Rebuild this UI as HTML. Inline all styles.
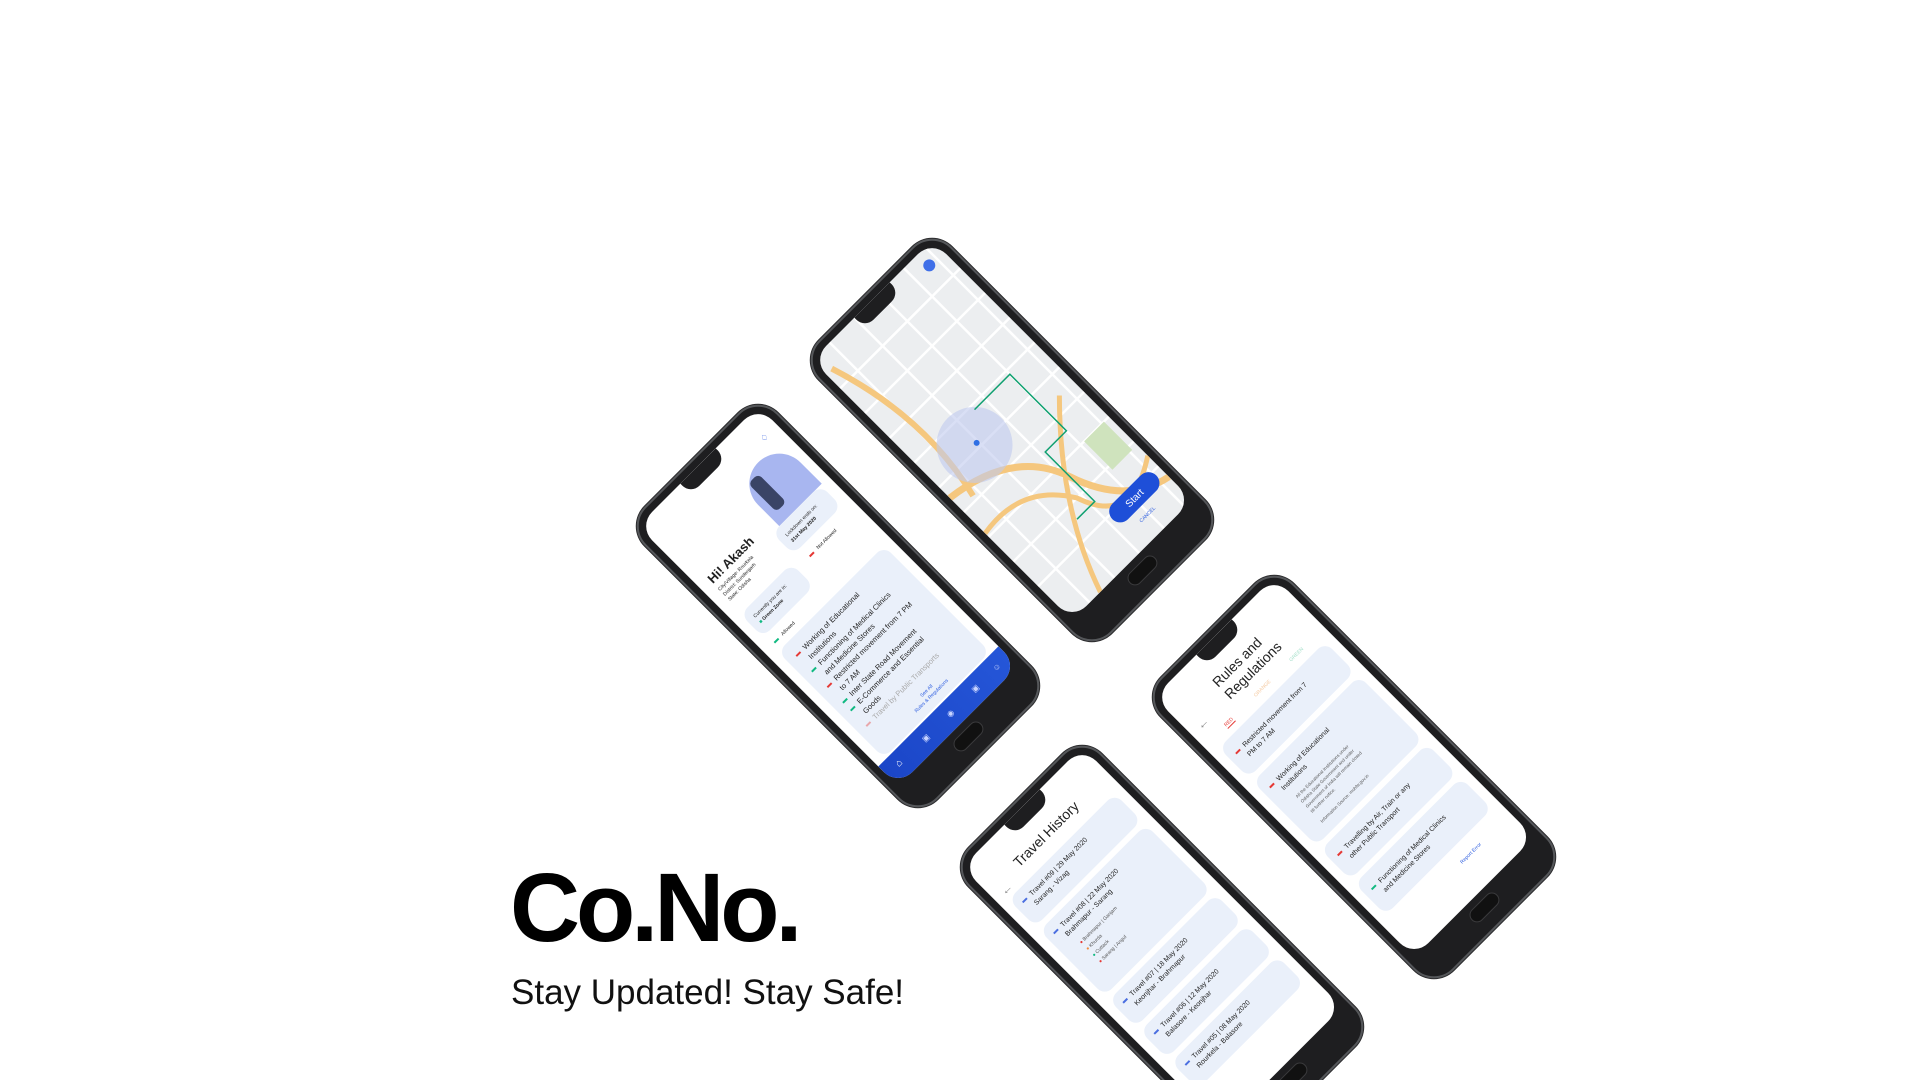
<!DOCTYPE html>
<html><head><meta charset="utf-8"><style>
*{margin:0;padding:0;box-sizing:border-box}
html,body{width:1920px;height:1080px;overflow:hidden}
body{background:#fff;position:relative;font-family:"Liberation Sans",sans-serif}
.ph{position:absolute;width:188px;height:414px;transform:rotate(-45deg);background:#1e1e20;border-radius:28px;border:2px solid #55575a;box-shadow:0 0 0 1px #2a2a2c}
.sc{position:absolute;left:7px;top:7px;width:170px;height:368px;background:#fff;border-radius:20px;overflow:hidden}
.notch{position:absolute;left:60px;top:0;width:50px;height:15px;background:#1e1e20;border-radius:0 0 12px 12px}
.hb{position:absolute;left:74px;top:382px;width:36px;height:15px;border-radius:9px;background:#111;border:1px solid #3a3a3c}
.t{position:absolute;color:#222;white-space:nowrap}
.card{position:absolute;background:#eaf0fa;border-radius:10px}
.d{display:inline-block;width:6px;height:2px;margin-right:5px;vertical-align:middle}
.r{background:#e53935}.g{background:#10b981}
</style></head><body>

<!-- Map phone -->
<div class="ph" style="left:918px;top:233px">
<div class="sc" style="background:#eceef0">
<svg width="170" height="368" style="position:absolute;left:0;top:0">
<g stroke="#fff" stroke-width="2.5"><line x1="0" y1="40" x2="170" y2="40"/><line x1="0" y1="75" x2="170" y2="75"/><line x1="0" y1="110" x2="170" y2="110"/><line x1="0" y1="145" x2="170" y2="145"/><line x1="0" y1="180" x2="170" y2="180"/><line x1="0" y1="215" x2="170" y2="215"/><line x1="0" y1="250" x2="170" y2="250"/><line x1="0" y1="285" x2="170" y2="285"/><line x1="0" y1="320" x2="170" y2="320"/><line x1="25" y1="0" x2="25" y2="368"/><line x1="60" y1="0" x2="60" y2="368"/><line x1="95" y1="0" x2="95" y2="368"/><line x1="130" y1="0" x2="130" y2="368"/><line x1="160" y1="0" x2="160" y2="368"/></g>
<rect x="135" y="250" width="28" height="40" fill="#cfe3bd"/>
<path d="M8 20 Q40 120 18 210" stroke="#f5c77e" stroke-width="6" fill="none"/>
<path d="M0 195 Q80 205 100 265 Q120 325 170 335" stroke="#f5c77e" stroke-width="7" fill="none"/>
<path d="M0 245 Q60 235 90 285 Q110 345 170 305" stroke="#f5c77e" stroke-width="5" fill="none"/>
<path d="M40 368 Q70 280 150 200" stroke="#f5c77e" stroke-width="5" fill="none"/>
<circle cx="55" cy="175" r="38" fill="#bfc9ef" opacity=".6"/>
<path d="M80 150 L130 150 L130 230 L100 230 L100 300 L75 300" stroke="#10a070" stroke-width="1.5" fill="none"/>
<circle cx="58" cy="175" r="3" fill="#2f6fe4"/>
<circle cx="150" cy="16" r="6" fill="#3f6fe8"/>
<rect x="100" y="314" width="62" height="22" rx="11" fill="#1e4fd8"/>
<text x="120" y="329" fill="#fff" font-size="10" font-family="Liberation Sans">Start</text>
<text x="118" y="348" fill="#2f5fe0" font-size="5" font-family="Liberation Sans">CANCEL</text>
</svg>
<div class="notch"></div></div><div class="hb"></div></div>

<!-- Home phone -->
<div class="ph" style="left:744px;top:399px">
<div class="sc">
<div class="notch"></div>
<div style="position:absolute;left:100px;top:40px;width:60px;height:60px;border-radius:50% 50% 0 0;background:#a8b6f0"></div>
<div style="position:absolute;left:108px;top:48px;width:14px;height:40px;background:#3a4466;border-radius:5px"></div>
<div class="t" style="left:148px;top:22px;color:#3a64e0;font-size:9px">♢</div>
<div class="t" style="left:12px;top:82px;font-size:13px;font-weight:bold">Hi! Akash</div>
<div class="t" style="left:12px;top:100px;font-size:5px;line-height:7px">City/Village: Rourkela<br>District: Sundergarh<br>State: Odisha</div>
<div class="card" style="left:90px;top:100px;width:68px;height:30px"><div class="t" style="left:8px;top:8px;font-size:5px;line-height:8px">Lockdown ends on:<br><b>31st May 2020</b></div></div>
<div class="card" style="left:10px;top:135px;width:72px;height:32px"><div class="t" style="left:8px;top:8px;font-size:5px;line-height:8px">Currently you are in:<br><span style="color:#10b981">■</span> <b>Green Zone</b></div></div>
<div class="t" style="left:14px;top:176px;font-size:5px"><span class="d g"></span>Allowed</div>
<div class="t" style="left:100px;top:140px;font-size:5px"><span class="d r"></span>Not Allowed</div>
<div class="card" style="left:10px;top:188px;width:150px;height:150px">
<div class="t" style="left:10px;top:10px;font-size:7.5px;line-height:11px"><span class="d r"></span>Working of Educational<br>&nbsp;&nbsp;&nbsp;&nbsp;Institutions<br><span class="d g"></span>Functioning of Medical Clinics<br>&nbsp;&nbsp;&nbsp;&nbsp;and Medicine Stores<br><span class="d r"></span>Restricted movement from 7 PM<br>&nbsp;&nbsp;&nbsp;&nbsp;to 7 AM<br><span class="d g"></span>Inter State Road Movement<br><span class="d g"></span>E-Commerce and Essential<br>&nbsp;&nbsp;&nbsp;&nbsp;Goods<br><span style="color:#aaa"><span class="d r" style="opacity:.4"></span>Travel by Public Transports</span></div>
<div class="t" style="left:55px;top:130px;font-size:5px;color:#2f5fe0;text-align:center;line-height:7px">See All<br>Rules &amp; Regulations</div></div>
<div style="position:absolute;left:0;top:340px;width:170px;height:28px;background:linear-gradient(90deg,#1b46c8,#2556d8)"></div>
<div class="t" style="left:14px;top:347px;color:#fff;font-size:10px">⌂</div>
<div class="t" style="left:50px;top:349px;color:#c8d4ff;font-size:8px">▣</div>
<div class="t" style="left:85px;top:349px;color:#c8d4ff;font-size:8px">◉</div>
<div class="t" style="left:120px;top:349px;color:#c8d4ff;font-size:8px">▣</div>
<div class="t" style="left:150px;top:349px;color:#c8d4ff;font-size:8px">☺</div>
</div><div class="hb"></div></div>

<!-- Rules phone -->
<div class="ph" style="left:1260px;top:570px">
<div class="sc"><div class="notch"></div>
<div class="t" style="left:10px;top:46px;font-size:12px;color:#888">←</div>
<div class="t" style="left:52px;top:26px;font-size:14px;line-height:17px">Rules and<br>Regulations</div>
<div class="t" style="left:30px;top:68px;font-size:5px;color:#e53935;border-bottom:1px solid #e53935">RED</div>
<div class="t" style="left:72px;top:68px;font-size:5px;color:#f5c9a0">ORANGE</div>
<div class="t" style="left:122px;top:68px;font-size:5px;color:#a8e0cc">GREEN</div>
<div class="card" style="left:10px;top:82px;width:150px;height:42px"><div class="t" style="left:8px;top:12px;font-size:7px;line-height:10px"><span class="d r"></span>Restricted movement from 7<br>&nbsp;&nbsp;&nbsp;&nbsp;PM to 7 AM</div></div>
<div class="card" style="left:10px;top:130px;width:150px;height:90px"><div class="t" style="left:8px;top:12px;font-size:7px;line-height:10px"><span class="d r"></span>Working of Educational<br>&nbsp;&nbsp;&nbsp;&nbsp;Institutions</div><div class="t" style="left:20px;top:38px;font-size:4.5px;line-height:7px;color:#555">All the Educational Institutions under<br>Odisha State Government and under<br>Government of India will remain closed<br>till further notice.<br><br>Information Source: mohfw.gov.in</div></div>
<div class="card" style="left:10px;top:226px;width:150px;height:42px"><div class="t" style="left:8px;top:12px;font-size:7px;line-height:10px"><span class="d r"></span>Travelling by Air, Train or any<br>&nbsp;&nbsp;&nbsp;&nbsp;other Public Transport</div></div>
<div class="card" style="left:10px;top:274px;width:150px;height:44px"><div class="t" style="left:8px;top:12px;font-size:7px;line-height:10px"><span class="d g"></span>Functioning of Medical Clinics<br>&nbsp;&nbsp;&nbsp;&nbsp;and Medicine Stores</div></div>
<div class="t" style="left:100px;top:332px;font-size:5px;color:#2f5fe0">Report Error</div>
</div><div class="hb"></div></div>

<!-- Travel phone -->
<div class="ph" style="left:1068px;top:740px">
<div class="sc"><div class="notch"></div>
<div class="t" style="left:10px;top:40px;font-size:12px;color:#888">←</div>
<div class="t" style="left:40px;top:28px;font-size:14px">Travel History</div>
<div class="card" style="left:10px;top:56px;width:150px;height:38px"><div class="t" style="left:8px;top:8px;font-size:7px;line-height:10px"><span class="d" style="background:#4a6ee0"></span>Travel #09 | 29 May 2020<br>&nbsp;&nbsp;&nbsp;&nbsp;Sarang - Vizag</div></div>
<div class="card" style="left:10px;top:100px;width:150px;height:92px"><div class="t" style="left:8px;top:8px;font-size:7px;line-height:10px"><span class="d" style="background:#4a6ee0"></span>Travel #08 | 22 May 2020<br>&nbsp;&nbsp;&nbsp;&nbsp;Brahmapur - Sarang</div><div class="t" style="left:20px;top:34px;font-size:5px;line-height:9px;color:#555"><span style="color:#e53935">●</span> Brahmapur | Ganjam<br><span style="color:#f08a3c">●</span> Khurda<br><span style="color:#10b981">●</span> Cuttack<br><span style="color:#e53935">●</span> Sarang | Angul</div></div>
<div class="card" style="left:10px;top:198px;width:150px;height:38px"><div class="t" style="left:8px;top:8px;font-size:7px;line-height:10px"><span class="d" style="background:#4a6ee0"></span>Travel #07 | 18 May 2020<br>&nbsp;&nbsp;&nbsp;&nbsp;Keonjhar - Brahmapur</div></div>
<div class="card" style="left:10px;top:242px;width:150px;height:38px"><div class="t" style="left:8px;top:8px;font-size:7px;line-height:10px"><span class="d" style="background:#4a6ee0"></span>Travel #06 | 12 May 2020<br>&nbsp;&nbsp;&nbsp;&nbsp;Balasore - Keonjhar</div></div>
<div class="card" style="left:10px;top:286px;width:150px;height:38px"><div class="t" style="left:8px;top:8px;font-size:7px;line-height:10px"><span class="d" style="background:#4a6ee0"></span>Travel #05 | 08 May 2020<br>&nbsp;&nbsp;&nbsp;&nbsp;Rourkela - Balasore</div></div>
</div><div class="hb"></div></div>

<div class="t" style="left:510px;top:852px;font-size:97px;font-weight:bold;color:#000;letter-spacing:-4px">Co.No.</div>
<div class="t" style="left:511px;top:973px;font-size:35px;color:#111">Stay Updated! Stay Safe!</div>
</body></html>
